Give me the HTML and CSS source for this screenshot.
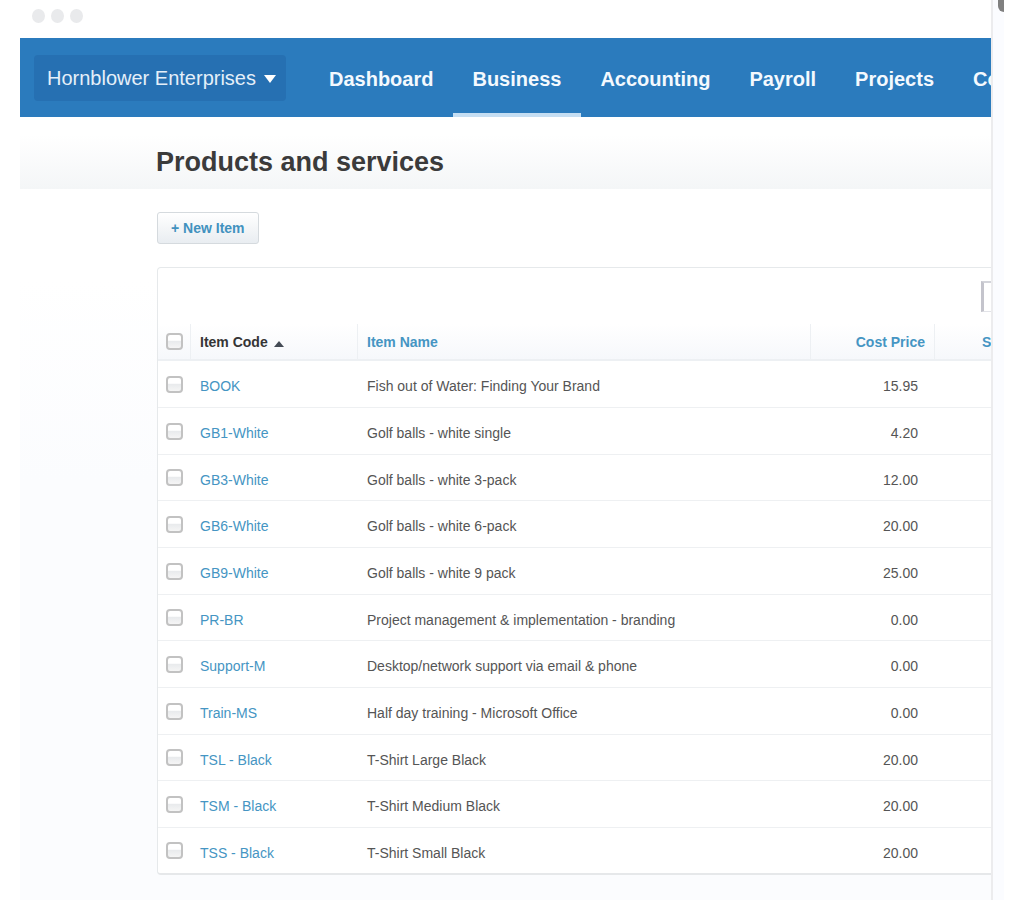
FILE: index.html
```html
<!DOCTYPE html>
<html lang="en">
<head>
  <meta charset="UTF-8" />
  <meta name="viewport" content="width=device-width, initial-scale=1" />
  <title>Products and services</title>
  <link rel="stylesheet" href="styles.css">
</head>
<body>
  <div class="frame">
    <div class="window">
      <div class="dots"><span></span><span></span><span></span></div>

      <header class="topbar">
        <button class="org" type="button">Hornblower Enterprises
          <svg width="12" height="8" viewBox="0 0 12 8" aria-hidden="true"><path d="M0 0h12L6 8z" fill="#fff"/></svg>
        </button>
        <nav class="nav">
          <a href="#">Dashboard</a>
          <a href="#" class="active">Business</a>
          <a href="#">Accounting</a>
          <a href="#">Payroll</a>
          <a href="#">Projects</a>
          <a href="#">Contacts</a>
        </nav>
      </header>

      <div class="title-bar"><h1>Products and services</h1></div>

      <main class="content">
        <button class="new-item" type="button">+ New Item</button>

        <div class="panel">
          <div class="search"><input type="text" aria-label="Search items"></div>
          <table class="items">
            <colgroup>
              <col class="col-check"><col class="col-code"><col><col class="col-price"><col class="col-price">
            </colgroup>
            <thead>
              <tr>
                <th><input type="checkbox" aria-label="Select all"></th>
                <th class="sorted"><a href="#">Item Code <svg width="10" height="6" viewBox="0 0 10 6" aria-hidden="true"><path d="M0 6h10L5 0z" fill="#444b55"/></svg></a></th>
                <th><a href="#">Item Name</a></th>
                <th class="price"><a href="#">Cost Price</a></th>
                <th class="price"><a href="#">Sale Price</a></th>
              </tr>
            </thead>
            <tbody>
              <tr><td><input type="checkbox" aria-label="BOOK"></td><td><a href="#">BOOK</a></td><td>Fish out of Water: Finding Your Brand</td><td class="price">15.95</td><td></td></tr>
              <tr><td><input type="checkbox" aria-label="GB1-White"></td><td><a href="#">GB1-White</a></td><td>Golf balls - white single</td><td class="price">4.20</td><td></td></tr>
              <tr><td><input type="checkbox" aria-label="GB3-White"></td><td><a href="#">GB3-White</a></td><td>Golf balls - white 3-pack</td><td class="price">12.00</td><td></td></tr>
              <tr><td><input type="checkbox" aria-label="GB6-White"></td><td><a href="#">GB6-White</a></td><td>Golf balls - white 6-pack</td><td class="price">20.00</td><td></td></tr>
              <tr><td><input type="checkbox" aria-label="GB9-White"></td><td><a href="#">GB9-White</a></td><td>Golf balls - white 9 pack</td><td class="price">25.00</td><td></td></tr>
              <tr><td><input type="checkbox" aria-label="PR-BR"></td><td><a href="#">PR-BR</a></td><td>Project management &amp; implementation - branding</td><td class="price">0.00</td><td></td></tr>
              <tr><td><input type="checkbox" aria-label="Support-M"></td><td><a href="#">Support-M</a></td><td>Desktop/network support via email &amp; phone</td><td class="price">0.00</td><td></td></tr>
              <tr><td><input type="checkbox" aria-label="Train-MS"></td><td><a href="#">Train-MS</a></td><td>Half day training - Microsoft Office</td><td class="price">0.00</td><td></td></tr>
              <tr><td><input type="checkbox" aria-label="TSL - Black"></td><td><a href="#">TSL - Black</a></td><td>T-Shirt Large Black</td><td class="price">20.00</td><td></td></tr>
              <tr><td><input type="checkbox" aria-label="TSM - Black"></td><td><a href="#">TSM - Black</a></td><td>T-Shirt Medium Black</td><td class="price">20.00</td><td></td></tr>
              <tr><td><input type="checkbox" aria-label="TSS - Black"></td><td><a href="#">TSS - Black</a></td><td>T-Shirt Small Black</td><td class="price">20.00</td><td></td></tr>
            </tbody>
          </table>
        </div>
      </main>
    </div>
    <div class="edge"><span></span></div>
  </div>
</body>
</html>
```
FILE: styles.css
```css
* { box-sizing: border-box; }
body { margin: 0; background: #fff; color: #555; font-family: "Liberation Sans", Arial, sans-serif; font-size: 14px; }
a { color: #4595c3; text-decoration: none; }
button { font-family: inherit; cursor: pointer; }

.frame { display: flex; margin: 0 20px 15px; }
.window { flex: 1; min-width: 0; overflow: hidden; background: linear-gradient(#fff 280px, #fbfcfe 480px); }
.edge { width: 13px; border-left: 2px solid #ececee; background: #fbfcff; overflow: hidden; }
.edge span { display: block; width: 12px; height: 12px; margin-left: 5px; border-bottom-left-radius: 6px; background: #808080; }

.dots { display: flex; gap: 6px; height: 38px; padding: 9px 12px; }
.dots span { width: 13px; height: 14px; border-radius: 50%; background: #e9eaec; }

.topbar { display: flex; align-items: center; height: 79px; padding-left: 14px; background: #2b7bbd; }
.org { display: flex; align-items: center; gap: 8px; height: 46px; padding: 2px 10px 0 13px; border: 0; border-radius: 4px; background: #2670b2; color: #e4eff9; font-size: 20px; white-space: nowrap; flex: none; }
.nav { display: flex; align-self: stretch; margin-left: 24px; }
.nav a { display: flex; align-items: center; padding: 7px 20px 0 19px; border-bottom: 4px solid transparent; color: #f4f9fe; font-size: 20px; font-weight: bold; }
.nav .active { border-bottom-color: #c5def3; }

.title-bar { margin-top: 18px; padding: 11px 0 11px 136px; background: linear-gradient(#fff, #f4f6f7); }
.title-bar h1 { margin: 0; color: #3b3b3b; font-size: 27px; line-height: 32px; }

.content { padding: 23px 0 25px 137px; }
.new-item { display: block; height: 32px; padding: 0 13px; border: 1px solid #d5dade; border-radius: 3px; background: linear-gradient(#fff, #e9edf1); color: #4292bf; font-size: 14px; font-weight: bold; }

/* the list runs past the right side of the window */
.panel { margin: 23px -69px 0 0; border: 1px solid #e6e9eb; border-bottom: 2px solid #e6e8ea; border-radius: 4px; background: #fff; }
.search { display: flex; justify-content: flex-end; padding: 13px 14px 12px 0; }
.search input { width: 64px; height: 31px; border: 1px solid #e2e3e8; border-top: 2px solid #d3d4da; border-left: 3px solid #c4c4cc; background: #fff; }

.items { width: 100%; border-collapse: separate; border-spacing: 0; table-layout: fixed; }
.col-check { width: 33px; }
.col-code { width: 167px; }
.col-price { width: 124px; }
th { height: 37px; padding: 0 9px; border-bottom: 2px solid #edf0f3; border-right: 1px solid #edf0f3; background: linear-gradient(#fff, #f6f8fb); text-align: left; line-height: 18px; }
th:first-child, td:first-child { padding: 0 0 0 8px; }
td { height: 47px; padding: 4px 8px 0 9px; border-bottom: 1px solid #eef0f2; line-height: 18px; }
tbody tr:nth-child(3n) td { height: 46px; }
tbody tr:last-child td { height: 45px; border-bottom: 0; }
.sorted a { color: #353535; }
.sorted svg { margin-left: 2px; }
.price { text-align: right; }
td.price { padding-right: 17px; }

input[type="checkbox"] { appearance: none; display: block; width: 17px; height: 17px; margin: 0; border: 2px solid #c2c2c2; border-radius: 4px; background: linear-gradient(#fff 40%, #e9ebed 50%, #f5f5f5); }
```
